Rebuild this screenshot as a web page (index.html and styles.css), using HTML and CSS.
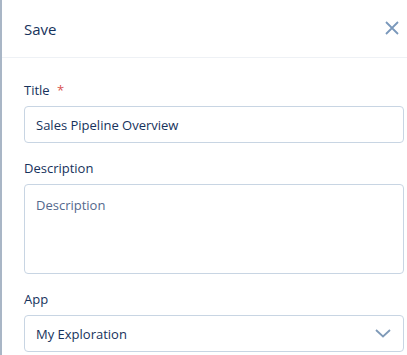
FILE: index.html
```html
<!DOCTYPE html>
<html>
<head>
    <title>Save</title>
    <link rel="stylesheet" href="styles.css">
</head>
<body>
    <div class="panel">
        <div class="panel-header">
            <h2>Save</h2>
            <button class="close-btn" aria-label="Close">
                <svg width="14" height="14" viewBox="0 0 14 14">
                    <path d="M1 1 L13 13 M13 1 L1 13" stroke="#7a98bb" stroke-width="1.8" fill="none"/>
                </svg>
            </button>
        </div>

        <div class="panel-body">
            <div class="field">
                <label for="title">Title <span class="required">*</span></label>
                <input type="text" id="title" value="Sales Pipeline Overview">
            </div>

            <div class="field">
                <label for="description">Description</label>
                <textarea id="description" placeholder="Description"></textarea>
            </div>

            <div class="field">
                <label for="app">App</label>
                <div class="select">
                    <span>My Exploration</span>
                    <svg width="16" height="9" viewBox="0 0 16 9">
                        <path d="M1 1 L8 7.5 L15 1" stroke="#7f9ab8" stroke-width="1.8" fill="none"/>
                    </svg>
                </div>
            </div>
        </div>
    </div>
</body>
</html>
```

FILE: styles.css
```css
body {
    margin: 0;
    font-family: "Open Sans", Arial, sans-serif;
    color: #16325c;
    background: white;
}
.panel {
    border-left: 2px solid #a9b6c6;
    height: 355px;
    box-sizing: border-box;
}
.panel-header {
    display: flex;
    justify-content: space-between;
    align-items: center;
    height: 58px;
    padding: 0 7px 0 22px;
    border-bottom: 1px solid #eef1f5;
    box-sizing: border-box;
}
.panel-header h2 {
    margin: 0;
    font-size: 15px;
    font-weight: normal;
}
.close-btn {
    background: none;
    border: none;
    padding: 0;
    width: 16px;
    height: 16px;
    display: flex;
    align-items: center;
    justify-content: center;
    margin-top: -2px;
}
.panel-body {
    padding: 23px 3px 0 22px;
}
.field {
    margin-bottom: 16px;
}
.field label {
    display: block;
    font-size: 13px;
    line-height: 18px;
    margin-bottom: 7px;
}
.required {
    color: #d9534f;
    margin-left: 4px;
}
input[type="text"], textarea, .select {
    display: block;
    width: 100%;
    box-sizing: border-box;
    border: 1px solid #c8d5e3;
    border-radius: 4px;
    font-family: "Open Sans", Arial, sans-serif;
    font-size: 13px;
    color: #16325c;
    padding: 0 11px;
    outline: none;
}
input[type="text"] {
    height: 37px;
}
textarea {
    height: 90px;
    padding-top: 11px;
    resize: none;
}
textarea::placeholder {
    color: #54698d;
}
.select {
    height: 37px;
    display: flex;
    align-items: center;
    justify-content: space-between;
    padding-right: 12px;
}
```
